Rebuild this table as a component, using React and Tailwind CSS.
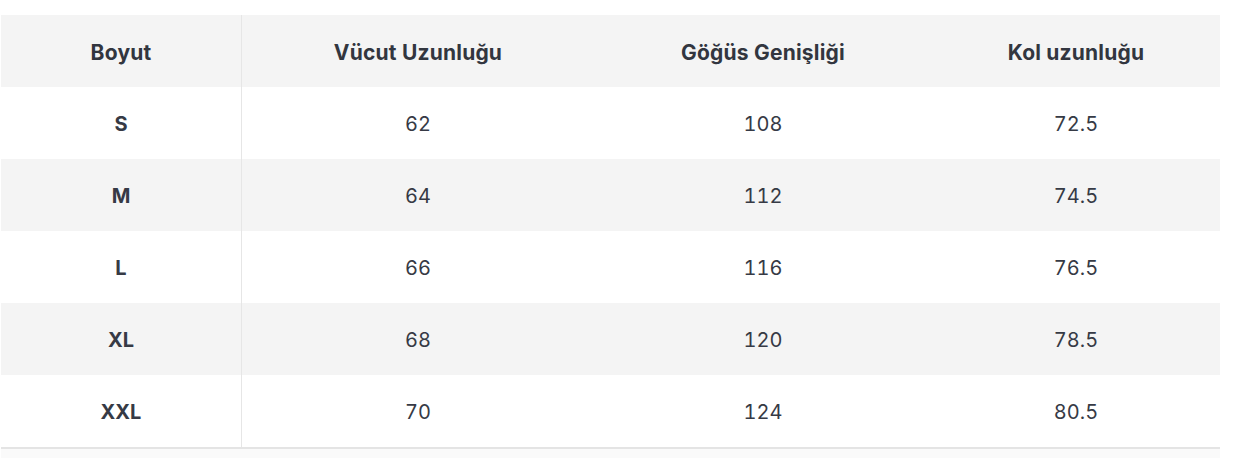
import React from 'react';

const rows = [
  ['S', '62', '108', '72.5'],
  ['M', '64', '112', '74.5'],
  ['L', '66', '116', '76.5'],
  ['XL', '68', '120', '78.5'],
  ['XXL', '70', '124', '80.5'],
];

const cols = 'grid grid-cols-[241px_352px_338px_288px]';

export default function App() {
  return (
    <div className="w-[1234px] h-[458px] bg-white pt-[15px] pl-px text-[#363a45] font-['Inter',sans-serif] text-[20px]">
      <div className="w-[1219px]">
        <div className={`${cols} h-[72px] bg-[#f4f4f4] font-bold text-[21px] tracking-[0.2px] text-[#32363f]`}>
          <div className="flex items-center justify-center pt-[3px] border-r border-[#e6e6e6]">Boyut</div>
          <div className="flex items-center justify-center pt-[3px]">Vücut Uzunluğu</div>
          <div className="flex items-center justify-center pt-[3px]">Göğüs Genişliği</div>
          <div className="flex items-center justify-center pt-[3px]">Kol uzunluğu</div>
        </div>
        {rows.map((r, i) => (
          <div key={r[0]} className={`${cols} h-[72px] tabular-nums ${i % 2 === 1 ? 'bg-[#f4f4f4]' : 'bg-white'}`}>
            <div className="flex items-center justify-center pt-[2px] border-r border-[#e6e6e6] font-bold">{r[0]}</div>
            <div className="flex items-center justify-center pt-[2px]">{r[1]}</div>
            <div className="flex items-center justify-center pt-[2px]">{r[2]}</div>
            <div className="flex items-center justify-center pt-[2px]">{r[3]}</div>
          </div>
        ))}
        <div className="h-[2px] bg-[#e4e4e4]" />
        <div className="h-[9px] bg-[#fafafa]" />
      </div>
    </div>
  );
}
